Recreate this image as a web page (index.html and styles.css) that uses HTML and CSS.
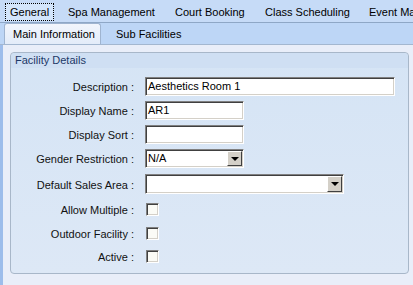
FILE: index.html
```html
<!DOCTYPE html>
<html lang="en">
<head>
  <meta charset="UTF-8" />
  <title>Facility</title>
  <link rel="stylesheet" href="styles.css">
</head>
<body>
  <div class="tabs main-tabs">
    <div class="tab active t1"><span class="focus">General</span></div>
    <div class="tab t2">Spa Management</div>
    <div class="tab t3">Court Booking</div>
    <div class="tab t4">Class Scheduling</div>
    <div class="tab t5">Event Management</div>
  </div>
  <div class="tabs sub-tabs">
    <div class="subtab active">Main Information</div>
    <div class="subtab">Sub Facilities</div>
  </div>

  <div class="content">
    <div class="group">
      <div class="group-title">Facility Details</div>
      <div class="form">
        <label>Description :</label>
        <div class="field"><div class="input wide">Aesthetics Room 1</div></div>

        <label>Display Name :</label>
        <div class="field"><div class="input short">AR1</div></div>

        <label>Display Sort :</label>
        <div class="field"><div class="input short"></div></div>

        <label>Gender Restriction :</label>
        <div class="field"><div class="input select short">N/A<span class="drop"></span></div></div>

        <label>Default Sales Area :</label>
        <div class="field"><div class="input select mid tall"><span class="drop"></span></div></div>

        <label>Allow Multiple :</label>
        <div class="field"><span class="check"></span></div>

        <label>Outdoor Facility :</label>
        <div class="field"><span class="check"></span></div>

        <label>Active :</label>
        <div class="field"><span class="check"></span></div>
      </div>
    </div>
  </div>
</body>
</html>
```

FILE: styles.css
```css
body {
  margin: 0;
  width: 413px;
  height: 285px;
  overflow: hidden;
  font-family: Tahoma, "Liberation Sans", Arial, sans-serif;
  font-size: 11px;
  color: #000;
  background-color: #e9eef9;
}

.tabs {
  display: flex;
  white-space: nowrap;
  overflow: hidden;
}

.main-tabs {
  height: 22px;
  background-color: #c6dbf7;
  border-bottom: 1px solid #8ea7c6;
  padding-left: 4px;
}

.tab {
  line-height: 24px;
  flex-shrink: 0;
}

.t1 { width: 54px; padding-left: 1px; line-height: normal; }
.t2 { width: 98px; padding-left: 9px; }
.t3 { width: 81px; padding-left: 9px; }
.t4 { width: 95px; padding-left: 9px; }
.t5 { width: 80px; padding-left: 9px; }

.focus {
  display: inline-block;
  line-height: 16px;
  padding: 0 4px;
  margin-top: 3px;
  border: 1px dotted #000;
  background-color: #d3e5fb;
}

.sub-tabs {
  height: 21px;
  background-color: #bdd6f6;
  border-bottom: 1px solid #a3b7d0;
  padding: 0 0 0 4px;
  align-items: flex-end;
}

.subtab {
  height: 20px;
  line-height: 21px;
  padding: 0 9px;
  margin-right: 6px;
}

.subtab.active {
  width: 78px;
  background: linear-gradient(#f1f5fc, #e3ecf9);
  border: 1px solid #9fb4d0;
  border-bottom: none;
  border-radius: 3px 3px 0 0;
  padding-left: 8px;
}

.content {
  border-left: 3px solid #9dbdeb;
  padding: 7px 4px 12px 7px;
  box-sizing: border-box;
  height: 241px;
}

.group {
  border: 1px solid #a8b7c9;
  border-radius: 4px;
  background: linear-gradient(#d5e4f5, #dde8f6);
  height: 220px;
}

.group-title {
  height: 15px;
  line-height: 15px;
  padding-left: 4px;
  color: #1d3867;
  background-color: #cfdff3;
  border-radius: 4px 4px 0 0;
}

.form {
  display: grid;
  grid-template-columns: 123px 1fr;
  grid-template-rows: 24px 24px 24px 25px 26px 25px 23px 22px;
  column-gap: 11px;
  padding-top: 6px;
}

.form label {
  display: flex;
  align-items: center;
  justify-content: flex-end;
  padding-top: 1px;
  color: #111;
}

.field {
  display: flex;
  align-items: center;
}

.input {
  position: relative;
  height: 19px;
  line-height: 17px;
  box-sizing: border-box;
  padding-left: 2px;
  background-color: #fff;
  border: 1px solid;
  border-color: #808080 #fff #fff #808080;
  box-shadow: inset 1px 1px #404040, inset -1px -1px #d4d0c8;
}

.wide { width: 250px; }
.short { width: 99px; }
.mid { width: 199px; }
.tall { height: 20px; }

.select .drop {
  position: absolute;
  right: 1px;
  top: 1px;
  width: 15px;
  height: 15px;
  box-sizing: border-box;
  background-color: #d4d0c8;
  border: 1px solid;
  border-color: #fff #404040 #404040 #fff;
}

.tall .drop { height: 16px; }

.select .drop::after {
  content: "";
  position: absolute;
  left: 3px;
  top: 5px;
  border-left: 4px solid transparent;
  border-right: 4px solid transparent;
  border-top: 4px solid #000;
}

.check {
  display: block;
  width: 13px;
  height: 13px;
  box-sizing: border-box;
  margin-left: 1px;
  background-color: #fbfbf6;
  border: 1px solid;
  border-color: #808080 #fff #fff #808080;
  box-shadow: inset 1px 1px #404040, inset -1px -1px #d4d0c8;
}
```
